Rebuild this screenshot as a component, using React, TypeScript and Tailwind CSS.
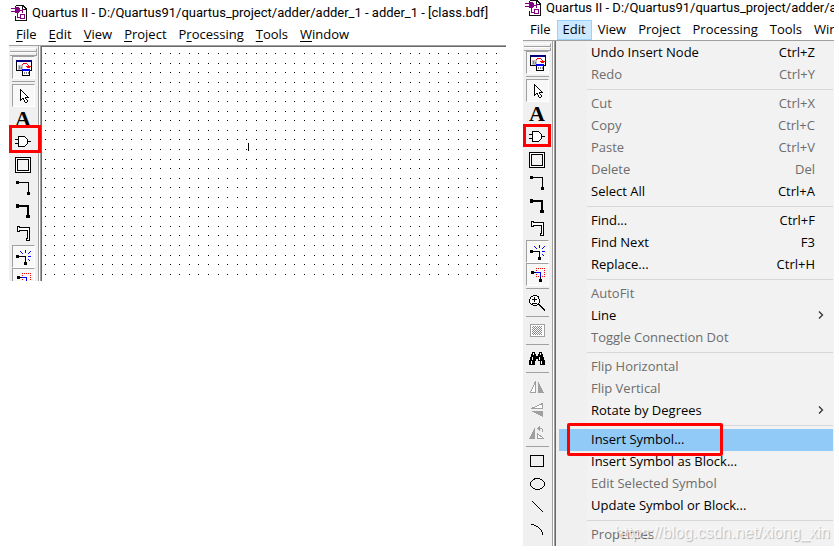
import React from 'react';
import clsx from 'clsx';

interface MenuEntry {
  label: string;
  shortcut?: string;
  disabled?: boolean;
  submenu?: boolean;
  active?: boolean;
}

const menuBar = [
  { label: 'File', key: 0 },
  { label: 'Edit', key: 0 },
  { label: 'View', key: 0 },
  { label: 'Project', key: 0 },
  { label: 'Processing', key: 1 },
  { label: 'Tools', key: 0 },
  { label: 'Window', key: 0 },
];

const editMenu: MenuEntry[][] = [
  [
    { label: 'Undo Insert Node', shortcut: 'Ctrl+Z' },
    { label: 'Redo', shortcut: 'Ctrl+Y', disabled: true },
  ],
  [
    { label: 'Cut', shortcut: 'Ctrl+X', disabled: true },
    { label: 'Copy', shortcut: 'Ctrl+C', disabled: true },
    { label: 'Paste', shortcut: 'Ctrl+V', disabled: true },
    { label: 'Delete', shortcut: 'Del', disabled: true },
    { label: 'Select All', shortcut: 'Ctrl+A' },
  ],
  [
    { label: 'Find...', shortcut: 'Ctrl+F' },
    { label: 'Find Next', shortcut: 'F3' },
    { label: 'Replace...', shortcut: 'Ctrl+H' },
  ],
  [
    { label: 'AutoFit', disabled: true },
    { label: 'Line', submenu: true },
    { label: 'Toggle Connection Dot', disabled: true },
  ],
  [
    { label: 'Flip Horizontal', disabled: true },
    { label: 'Flip Vertical', disabled: true },
    { label: 'Rotate by Degrees', submenu: true },
  ],
  [
    { label: 'Insert Symbol...', active: true },
    { label: 'Insert Symbol as Block...' },
    { label: 'Edit Selected Symbol', disabled: true },
    { label: 'Update Symbol or Block...' },
  ],
  [{ label: 'Properties', disabled: true }],
];

function Icon({ children }: { children: React.ReactNode }) {
  return (
    <svg width="16" height="16" viewBox="0 0 16 16" fill="none" shapeRendering="crispEdges" aria-hidden="true" className="block">
      {children}
    </svg>
  );
}

function AppIcon() {
  return (
    <Icon>
      <path d="M5 0.5h7l3.5 3.5v11.5H4.5V11M4.5 3V0.5" stroke="#111" fill="#fff" />
      <path d="M11.5 0.5v4h4" stroke="#111" />
      <path d="M0 3.5h5M0 6.5h5M8 5h4" stroke="#800080" />
      <path d="M4 2h3l2 2v3l-2 1H4z" fill="#800080" />
      <path d="M11.5 4v4M6.5 8v5M6 12.5h3M9 9.5h4.5v4H9.5V9" stroke="#800080" />
    </Icon>
  );
}

function HierarchyIcon() {
  return (
    <Icon>
      <path d="M0.5 0.5h15v10H0.5z" fill="#fff" stroke="#000" />
      <path d="M0 0h16v2H0z" fill="#000080" />
      <path d="M2 5h5v5H2z" fill="#c0c0c0" />
      <path d="M3 6h1v3H3zM5 7h1v2H5z" fill="#808080" />
      <path d="M6 4h1v1H6zM7 3h4v1H7zM11 4h1v1h-1zM12 5h1v1h-1z" fill="#f00" />
      <path d="M10 6h5v1h-1v1h-3v-1h-1z" fill="#f00" />
      <path d="M6.5 9.5h7v6h-7z" fill="#fff" stroke="#000" />
      <path d="M6 9h8v2H6z" fill="#00f" />
      <path d="M8 12h1v2H8zM10 12h1v2h-1zM12 12h1v2h-1z" fill="#808080" />
    </Icon>
  );
}

function ArrowIcon() {
  return (
    <Icon>
      <path d="M4.5 1.5v11.500l3-3 2.500 5 2-1-2.500-4.500h3.500z" fill="#fff" />
      <path
        d="M4 1h1v12H4zM5 2h1v1H5zM6 3h1v1H6zM7 4h1v1H7zM8 5h1v1H8zM9 6h1v1H9zM10 7h1v1h-1zM11 8h1v1h-1zM9 9h4v1H9zM5 11h1v1H5zM6 10h1v1H6zM7 10h1v2H7zM8 12h1v2H8zM9 14h2v1H9zM9 10h1v1H9zM10 11h1v1h-1zM11 12h1v2h-1z"
        fill="#000"
      />
    </Icon>
  );
}

function GateIcon() {
  return (
    <Icon>
      <path d="M4 3h6l2 2 1 2v1l-1 3-3 1H4z" fill="#fff" />
      <path d="M3 2h7v1H3zM3 12h7v1H3zM3 2h1v11H3zM10 3h1v1h-1zM11 4h1v1h-1zM12 5h1v5h-1zM11 10h1v1h-1zM10 11h1v1h-1z" fill="#000" />
      <path d="M0 5h3v1H0zM0 9h3v1H0zM13 7h3v1h-3z" fill="#000" />
    </Icon>
  );
}

function BlockIcon() {
  return (
    <Icon>
      <path d="M1.500 1.500h13v13h-13z" stroke="#fff" />
      <path d="M0.500 0.500h15v15h-15z" stroke="#000" />
      <path d="M2.500 2.500h11v11h-11z" fill="#f4f4f4" stroke="#000" />
    </Icon>
  );
}

function NodeIcon() {
  return (
    <Icon>
      <path d="M1 1h3v3H1zM12 12h3v3h-3z" fill="#000" />
      <path d="M3 2h11v11h-1V3H3z" fill="#000" />
    </Icon>
  );
}

function BusIcon() {
  return (
    <Icon>
      <path d="M1 1h3v4H1zM11 12h4v3h-4z" fill="#000" />
      <path d="M3 2h11v11h-2V4H3z" fill="#000" />
    </Icon>
  );
}

function ConduitIcon() {
  return (
    <Icon>
      <path d="M2.500 0.500h2v1h10v11h0v2h-3v-2h1v-8h-8v1h-2z" fill="#fff" stroke="#000" />
    </Icon>
  );
}

function PartialLineIcon() {
  return (
    <Icon>
      <path d="M0 6h3v3H0zM8 13h3v3H8z" fill="#000" />
      <path d="M2 7h8v7H9V8H2z" fill="#000" />
      <path
        d="M9 1h1v3H9zM12 7h3v1h-3zM4 2h1v1H4zM5 3h1v1H5zM6 4h1v1H6zM14 2h1v1h-1zM13 3h1v1h-1zM12 4h1v1h-1zM12 10h1v1h-1zM13 11h1v1h-1z"
        fill="#00f"
      />
    </Icon>
  );
}

function RubberIcon() {
  return (
    <Icon>
      <path d="M6 1.500h9M6 9.500h9M6.500 3v6M14.500 3v6" stroke="#f00" strokeDasharray="1 1" />
      <path d="M1 4h3v3H1zM9 12h3v3H9z" fill="#000" />
      <path d="M3 5h3v1H3zM10 10h1v3h-1z" fill="#000" />
      <path d="M6 5h5v5h-1V6H6z" fill="#00f" />
    </Icon>
  );
}

function ZoomIcon() {
  return (
    <Icon>
      <path d="M4 1h4l2 2v5l-2 2H4L1 8V3z" fill="#fff" />
      <path d="M4 0h4v1H4zM4 10h4v1H4zM0 4h1v4H0zM10 4h1v4h-1zM2 1h2v1H2zM1 2h1v2H1zM8 1h2v1H8zM9 2h1v2H9zM1 8h1v1H1zM2 9h2v1H2zM8 9h2v1H8zM9 8h1v1H9z" fill="#000" />
      <path d="M3 4h5v1H3zM5 2h1v5H5zM3 8h5v1H3z" fill="#000" />
      <path d="M10 9h1v1h1v1h1v1h1v1h1v1h1v2h-1v-1h-1v-1h-1v-1h-1v-1h-1v-1h-1z" fill="#000" />
    </Icon>
  );
}

function GridIcon() {
  return (
    <Icon>
      <path d="M1.500 1.500h14v12h-14z" fill="#fff" stroke="#a0a0a0" />
      {[3, 4, 5, 6, 7, 8, 9, 10, 11].map((y) => (
        <path key={y} d={`M${3 + (y % 2)} ${y + 0.5}h10`} stroke="#888" strokeDasharray="1 1" />
      ))}
    </Icon>
  );
}

function BinocularsIcon() {
  return (
    <Icon>
      <path d="M3 1h3v2h1v2h2V3h1V1h3v2h1v3h1v3h1v5h-5v-4H9V8H7v2H6v4H0V9h1V6h1V3h1z" fill="#000" />
      <path d="M4 2h1v2H4zM11 2h1v2h-1zM3 6h1v3H3zM10 6h1v3h-1zM2 10h1v3H2zM12 10h1v3h-1z" fill="#fff" />
    </Icon>
  );
}

function FlipHorizontalIcon() {
  return (
    <Icon>
      <path d="M6.500 2.500v11h-5z" fill="#fff" stroke="#a0a0a0" />
      <path d="M9 2v12h6z" fill="#a0a0a0" />
    </Icon>
  );
}

function FlipVerticalIcon() {
  return (
    <Icon>
      <path d="M13.500 1.500v5h-11z" fill="#fff" stroke="#a0a0a0" />
      <path d="M2 9h12v6z" fill="#a0a0a0" />
    </Icon>
  );
}

function RotateIcon() {
  return (
    <Icon>
      <path d="M6 2v12H0z" fill="#a0a0a0" />
      <path d="M8.500 8.500v5h6z" fill="#fff" stroke="#a0a0a0" />
      <path d="M10 3h3v1h-3zM13 4h1v3h-1z" fill="#a0a0a0" />
      <path d="M11 1v5L8 3.500z" fill="#a0a0a0" />
    </Icon>
  );
}

function RectangleIcon() {
  return (
    <Icon>
      <path d="M1.500 2.500h13v11h-13z" stroke="#000" />
    </Icon>
  );
}

function OvalIcon() {
  return (
    <Icon>
      <ellipse cx="8.500" cy="8" rx="7" ry="5.500" stroke="#000" />
    </Icon>
  );
}

function LineIcon() {
  return (
    <Icon>
      {[3, 4, 5, 6, 7, 8, 9, 10, 11, 12, 13].map((x) => (
        <rect key={x} x={x} y={x - 1} width="1" height="1" fill="#000" />
      ))}
    </Icon>
  );
}

function ArcIcon() {
  return (
    <Icon>
      <path d="M2 2h3v1H2zM5 3h2v1H5zM7 4h2v1H7zM9 5h1v1H9zM10 6h1v1h-1zM11 7h1v1h-1zM12 8h1v2h-1zM13 10h1v3h-1z" fill="#000" />
    </Icon>
  );
}

function TextIcon() {
  return (
    <span className="block w-4 text-center font-['Liberation_Serif',serif] text-[22px] leading-4 font-bold">A</span>
  );
}

interface Tool {
  name: string;
  icon: React.ReactNode;
  pressed?: boolean;
  marked?: boolean;
}

const toolGroups: Tool[][] = [
  [{ name: 'Detach window', icon: <HierarchyIcon />, pressed: true }],
  [
    { name: 'Selection tool', icon: <ArrowIcon />, pressed: true },
    { name: 'Text tool', icon: <TextIcon /> },
    { name: 'Symbol tool', icon: <GateIcon />, marked: true },
    { name: 'Block tool', icon: <BlockIcon /> },
    { name: 'Orthogonal node tool', icon: <NodeIcon /> },
    { name: 'Orthogonal bus tool', icon: <BusIcon /> },
    { name: 'Orthogonal conduit tool', icon: <ConduitIcon /> },
    { name: 'Partial line selection', icon: <PartialLineIcon />, pressed: true },
    { name: 'Rubberbanding', icon: <RubberIcon />, pressed: true },
  ],
  [{ name: 'Zoom tool', icon: <ZoomIcon /> }],
  [{ name: 'Full screen', icon: <GridIcon /> }],
  [{ name: 'Find', icon: <BinocularsIcon /> }],
  [
    { name: 'Flip horizontal', icon: <FlipHorizontalIcon /> },
    { name: 'Flip vertical', icon: <FlipVerticalIcon /> },
    { name: 'Rotate left', icon: <RotateIcon /> },
  ],
  [
    { name: 'Rectangle tool', icon: <RectangleIcon /> },
    { name: 'Oval tool', icon: <OvalIcon /> },
    { name: 'Line tool', icon: <LineIcon /> },
    { name: 'Arc tool', icon: <ArcIcon /> },
  ],
];

function Toolbar({ markClass }: { markClass: string }) {
  return (
    <div className="flex w-[33px] shrink-0 border-r border-[#696969] bg-[#f0f0f0]">
      <div className="w-[29px] shrink-0 pt-[2px]">
        <div className="ml-px h-1 w-[27px] border-t border-r border-b border-[#a0a0a0] border-t-white" />
        <div className="ml-px h-1 w-[27px] border-t border-r border-b border-[#a0a0a0] border-t-white" />
        {toolGroups.map((group, i) => (
          <div key={i} className={clsx('ml-[3px] w-[23px]', i > 0 && 'mt-[2px] border-t border-[#a0a0a0] pt-[2px]')}>
            {group.map((tool) => (
              <button
                key={tool.name}
                type="button"
                aria-label={tool.name}
                className={clsx(
                  'relative block size-[23px] p-[3px]',
                  tool.pressed && 'border border-white border-t-[#a0a0a0] border-l-[#a0a0a0] bg-[#f8f8f8]',
                )}
              >
                {tool.icon}
                {tool.marked && <span className={clsx('absolute z-10 border-3 border-[#f00]', markClass)} />}
              </button>
            ))}
          </div>
        ))}
      </div>
      <div className="flex-1 border-x border-[#a0a0a0] bg-white" />
    </div>
  );
}

function TitleBar({ children }: { children: React.ReactNode }) {
  return (
    <div className="flex items-center gap-[5px] pl-[2px] font-['Roboto',sans-serif] text-[13px] leading-4">
      <span className="shrink-0">
        <AppIcon />
      </span>
      <h1>{children}</h1>
    </div>
  );
}

function MenuBar({ open, underline }: { open?: string; underline?: boolean }) {
  return (
    <nav className="flex pl-px">
      {menuBar.map(({ label, key }) => (
        <button
          key={label}
          type="button"
          className={clsx(
            'h-5 border px-[5px] pb-[2px] text-[13px] leading-4',
            open === label ? 'border-[#99d1ff] bg-[#cce8ff]' : 'border-transparent',
          )}
        >
          {label.slice(0, key)}
          <span className={clsx(underline && 'underline underline-offset-2')}>{label[key]}</span>
          {label.slice(key + 1)}
        </button>
      ))}
    </nav>
  );
}

// 5 x 5 dots per tile, 9.6px apart and snapped to whole pixels
const dotColumns = [3, 12, 22, 32, 41];
const dotRows = [6, 16, 25, 35, 44];

function Canvas() {
  return (
    <div className="relative min-w-0 flex-1 border-t border-[#696969] bg-white">
      <svg width="100%" height="100%" shapeRendering="crispEdges" className="block" aria-label="Drawing sheet">
        <defs>
          <pattern id="dots" width="48" height="48" patternUnits="userSpaceOnUse">
            {dotRows.map((y) => dotColumns.map((x) => <rect key={`${x}-${y}`} x={x} y={y} width="1" height="1" />))}
          </pattern>
        </defs>
        <rect width="100%" height="100%" fill="url(#dots)" />
      </svg>
      <span className="absolute top-24 left-[206px] h-2 w-px bg-black" />
    </div>
  );
}

function EditMenu() {
  return (
    <div className="relative min-w-0 flex-1 bg-[#f0f0f0] pt-px pr-px pl-[3px]">
      <div className="absolute inset-y-0 right-0 left-[31px] bg-[#f2f2f2]" />
      {editMenu.map((section, i) => (
        <div key={i} className="relative">
          {i > 0 && <hr className="mt-[3px] mb-[3px] ml-7 border-t border-[#d7d7d7]" />}
          {section.map((item) => (
            <button
              key={item.label}
              type="button"
              disabled={item.disabled}
              className={clsx(
                'relative flex h-[22px] w-full items-center justify-between pr-[18px] pb-[2px] pl-8 text-[13px] leading-4',
                item.disabled ? 'text-[#6d6d6d]' : 'text-black',
                item.active && 'bg-[#91c9f7]',
              )}
            >
              <span>{item.label}</span>
              {item.shortcut && <span>{item.shortcut}</span>}
              {item.submenu && (
                <svg width="6" height="8" viewBox="0 0 6 8" fill="none" className="-mr-[9px]" aria-hidden="true">
                  <path d="M1 0.500l3.500 3.500L1 7.500" stroke="#333" strokeWidth="1.300" />
                </svg>
              )}
              {item.active && (
                <span className="absolute -top-[6px] left-2 z-10 h-[33px] w-[156px] rounded-xs border-3 border-[#f00]" />
              )}
            </button>
          ))}
        </div>
      ))}
      <span className="absolute right-1 bottom-1 font-['Liberation_Sans',sans-serif] text-base leading-[18px] text-white/80 [text-shadow:1px_1px_1px_#00000040]">
        https://blog.csdn.net/xiong_xin
      </span>
    </div>
  );
}

export default function App() {
  return (
    <main className="grid min-h-screen grid-cols-[497fr_311fr] items-start gap-[17px] bg-white pr-[5px] pl-[9px] font-['Open_Sans',sans-serif] whitespace-nowrap text-black">
      <section className="min-w-0 overflow-hidden pt-[5px]">
        <TitleBar>Quartus II - D:/Quartus91/quartus_project/adder/adder_1 - adder_1 - [class.bdf]</TitleBar>
        <div className="pt-1">
          <MenuBar underline />
        </div>
        <div className="flex h-[236px] overflow-hidden border-t border-[#a0a0a0]">
          <Toolbar markClass="-top-[5px] -left-[3px] h-[28px] w-8" />
          <Canvas />
        </div>
      </section>
      <section className="min-w-0 overflow-hidden">
        <TitleBar>Quartus II - D:/Quartus91/quartus_project/adder/adder_1 - adder_1 - [class.bdf]</TitleBar>
        <div className="pt-1">
          <MenuBar open="Edit" />
        </div>
        <div className="flex border-t border-[#a0a0a0]">
          <Toolbar markClass="-top-px -left-[3px] h-[23px] w-7" />
          <EditMenu />
        </div>
      </section>
    </main>
  );
}
